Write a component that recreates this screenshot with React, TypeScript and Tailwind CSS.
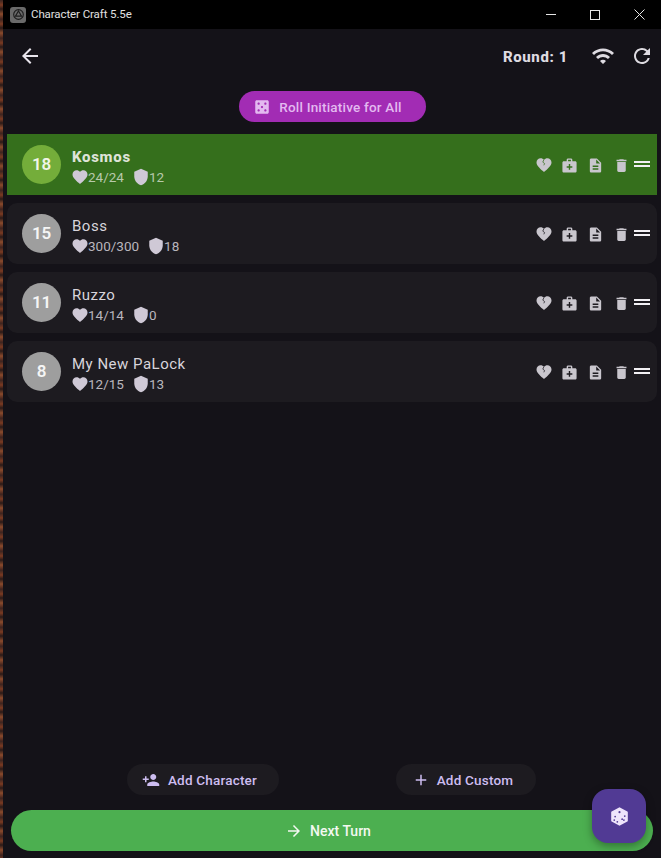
import React from 'react';
import {
  MdAdd,
  MdArrowBack,
  MdArrowForward,
  MdCasino,
  MdDelete,
  MdDescription,
  MdDragHandle,
  MdFavorite,
  MdMedicalServices,
  MdPersonAdd,
  MdRefresh,
  MdShield,
  MdWifi,
} from 'react-icons/md';

type Combatant = {
  init: number;
  name: string;
  hp: string;
  ac: number;
  active?: boolean;
};

const combatants: Combatant[] = [
  { init: 18, name: 'Kosmos', hp: '24/24', ac: 12, active: true },
  { init: 15, name: 'Boss', hp: '300/300', ac: 18 },
  { init: 11, name: 'Ruzzo', hp: '14/14', ac: 0 },
  { init: 8, name: 'My New PaLock', hp: '12/15', ac: 13 },
];

// heart with a thin crack from the top notch
function CrackedHeart({ crack }: { crack: string }) {
  return (
    <svg className="h-[18px] w-[18px]" viewBox="0 0 24 24">
      <path
        fill="currentColor"
        d="M12 21.35l-1.45-1.32C5.4 15.36 2 12.28 2 8.5 2 5.42 4.42 3 7.5 3c1.74 0 3.41.81 4.5 2.09C13.09 3.81 14.76 3 16.5 3 19.58 3 22 5.42 22 8.5c0 3.78-3.4 6.86-8.55 11.54L12 21.35z"
      />
      <path fill="none" stroke={crack} strokeWidth="1" d="M11.8 5l-1.4 3.2 2.4 1.8-1 2.4" />
    </svg>
  );
}

function DiceCube() {
  return (
    <svg className="h-[21px] w-[21px]" viewBox="0 0 24 24">
      <path fill="#eee4fb" stroke="#eee4fb" strokeWidth="2" strokeLinejoin="round" d="M12 2.5l8.5 4.6v9.8L12 21.5l-8.5-4.6V7.1z" />
      <g fill="#513a94">
        <circle cx="12" cy="7" r="1.2" />
        <circle cx="7" cy="12" r="1" />
        <circle cx="9.5" cy="18" r="1" />
        <circle cx="6" cy="16" r="1" />
        <circle cx="18" cy="11.5" r="1" />
        <circle cx="15" cy="15" r="1" />
        <circle cx="17" cy="16" r="1" />
      </g>
    </svg>
  );
}

function Row({ c }: { c: Combatant }) {
  return (
    <div
      className={
        c.active
          ? 'flex h-[61px] items-center bg-[#356f1c] pl-[15px] pr-[2px]'
          : 'flex h-[61px] items-center rounded-[10px] bg-[#1d1b20] pl-[15px] pr-[2px]'
      }
    >
      <div
        className={
          c.active
            ? 'flex h-[39px] w-[39px] shrink-0 items-center justify-center rounded-full bg-[#74ad3a] pt-px text-[17px] font-semibold tracking-[-0.3px] text-[#f1f5e8]'
            : 'flex h-[39px] w-[39px] shrink-0 items-center justify-center rounded-full bg-[#9e9e9e] pt-px text-[17px] font-semibold tracking-[-0.3px] text-[#f5f5f5]'
        }
      >
        {c.init}
      </div>
      <div className="ml-[11px] min-w-0 flex-1 pt-[4px]">
        <div
          className={
            c.active
              ? 'text-[15px] leading-[20px] font-extrabold tracking-[0.7px] text-[#dfe3d8]'
              : 'text-[15px] leading-[20px] tracking-[0.5px] text-[#d8d5db]'
          }
        >
          {c.name}
        </div>
        <div
          className={
            c.active
              ? 'flex items-center text-[13.5px] leading-[20px] text-[#b7c9ab]'
              : 'flex items-center text-[13.5px] leading-[20px] text-[#b9b6bd]'
          }
        >
          <MdFavorite className="-ml-px h-[18px] w-[18px] text-[#cfc9d6]" />
          <span className="-ml-px">{c.hp}</span>
          <MdShield className="ml-[8px] h-[18px] w-[18px] text-[#cfc9d6]" />
          <span className="-ml-px">{c.ac}</span>
        </div>
      </div>
      <div className="flex items-center pt-px text-[#c9c6cd]">
        <CrackedHeart crack={c.active ? '#356f1c' : '#1d1b20'} />
        <MdMedicalServices className="ml-[8px] h-[17px] w-[17px]" />
        <MdDescription className="ml-[9px] h-[17px] w-[17px]" />
        <MdDelete className="ml-[9px] h-[17px] w-[17px]" />
        <MdDragHandle className="mr-px -mt-[2px] h-[24px] w-[24px] text-[#f2f0f4]" />
      </div>
    </div>
  );
}

export default function App() {
  return (
    <div
      className="relative flex h-[858px] w-[661px] overflow-hidden bg-[#141218]"
      style={{ fontFamily: 'Roboto, "Noto Sans", sans-serif' }}
    >
      <div className="w-[3px] shrink-0 bg-[repeating-linear-gradient(180deg,#3a2420_0px,#7a3a22_5px,#2a1a18_9px,#8a4a2c_14px,#43241e_19px)]" />
      <div className="flex min-w-0 flex-1 flex-col">
        <div className="flex h-[29px] shrink-0 items-center bg-black">
          <div className="ml-[7px] flex h-[16px] w-[16px] items-center justify-center rounded-[3px] bg-[#6a6a6a]">
            <svg className="h-[13px] w-[13px]" viewBox="0 0 14 14" fill="none" stroke="#1c1c1c" strokeWidth="1.2">
              <circle cx="7" cy="7" r="5.2" />
              <path d="M7 3.2l3.3 5.6H3.7z" />
            </svg>
          </div>
          <span className="ml-[5px] flex-1 text-[11.5px] tracking-[-0.1px] text-[#e0e0e0]">
            Character Craft 5.5e
          </span>
          <div className="flex items-center text-[#e6e6e6]">
            <div className="h-px w-[10px] bg-[#e6e6e6]" />
            <div className="ml-[34px] h-[10px] w-[10px] border border-[#e6e6e6]" />
            <svg className="ml-[34px] mr-[16px] h-[11px] w-[11px]" viewBox="0 0 11 11" stroke="currentColor" fill="none">
              <path d="M0.5 0.5 10.5 10.5M10.5 0.5 0.5 10.5" />
            </svg>
          </div>
        </div>

        <div className="flex h-[54px] shrink-0 items-center pl-[15px] pr-[7px]">
          <MdArrowBack className="h-[24px] w-[24px] text-[#e8e4ec]" />
          <span className="ml-auto pt-[2px] text-[15px] font-extrabold tracking-[0.6px] text-[#dedbe1]">Round: 1</span>
          <MdWifi className="ml-[23px] h-[24px] w-[24px] text-[#dedbe1]" />
          <MdRefresh className="ml-[15px] h-[24px] w-[24px] text-[#dedbe1]" />
        </div>

        <div className="flex justify-center pt-[8px]">
          <button className="flex h-[31px] w-[187px] items-center justify-center rounded-full bg-[#a22cb4] pr-[9px] text-[13.5px] font-medium tracking-[0.2px] text-[#e3b9f0]">
            <MdCasino className="mr-[8px] h-[18px] w-[18px]" />
            <span className="pt-px">Roll Initiative for All</span>
          </button>
        </div>

        <div className="mt-[12px] flex flex-col gap-[8px] px-[4px]">
          {combatants.map((c) => (
            <Row key={c.name} c={c} />
          ))}
        </div>

        <div className="mt-auto pb-[7px] px-[8px]">
          <div className="flex">
            <button className="ml-[116px] flex h-[31px] w-[152px] items-center justify-center rounded-full bg-[#1d1b20] pr-[7px] text-[13.5px] font-medium tracking-[0.2px] text-[#cdbdf0]">
              <MdPersonAdd className="mr-[8px] h-[18px] w-[18px]" />
              <span className="pt-[2px]">Add Character</span>
            </button>
            <button className="ml-[117px] flex h-[31px] w-[140px] items-center justify-center rounded-full bg-[#1d1b20] pr-[7px] text-[13.5px] font-medium tracking-[0.2px] text-[#cdbdf0]">
              <MdAdd className="mr-[7px] h-[18px] w-[18px]" />
              <span className="pt-[2px]">Add Custom</span>
            </button>
          </div>
          <button className="mt-[15px] flex h-[41px] w-full items-center justify-center rounded-full bg-[#4caf50] pr-[8px] text-[14px] font-medium text-[#f3f8f1]">
            <MdArrowForward className="mr-[7px] h-[18px] w-[18px]" />
            <span className="pt-[2px]">Next Turn</span>
          </button>
        </div>
      </div>

      <button className="absolute left-[592px] top-[789px] flex h-[54px] w-[54px] items-center justify-center rounded-[16px] bg-[#513a94] shadow-[0_3px_8px_rgba(0,0,0,0.35)]">
        <DiceCube />
      </button>
    </div>
  );
}
